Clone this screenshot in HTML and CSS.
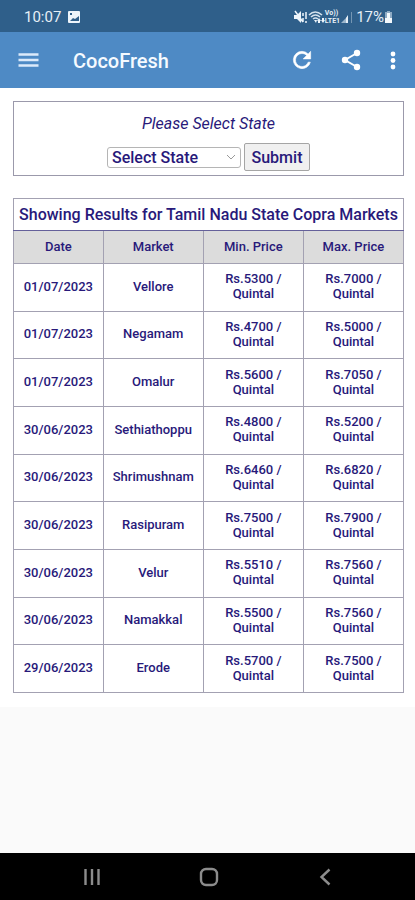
FILE: index.html
```
<!DOCTYPE html>
<html lang="en">
<head>
	<meta charset="UTF-8">
	<meta name="viewport" content="width=device-width, initial-scale=1">
	<title>CocoFresh</title>
	<link rel="stylesheet" href="styles.css">
</head>
<body>
	<div class="status">
		<span class="time">10:07</span>
		<svg class="pic" width="14" height="14" viewBox="0 0 14 14"><path fill="#eef5fb" fill-rule="evenodd" d="M2 1h10q1 0 1 1v10q0 1-1 1H2q-1 0-1-1V2q0-1 1-1zM3 3v2h2V3zM3 11h9V6L8 9 6 8z"/></svg>
		<div class="signals">
			<svg width="15" height="14" viewBox="0 0 15 14"><path fill="#eef5fb" d="M1 5h3l4-4v12L4 9H1z"/><path fill="none" stroke="#eef5fb" stroke-width="1.5" d="M2 1l8 11M10 3v3M10 8v4M13 2v7M13 11v2"/></svg>
			<svg class="wifi" width="17" height="14" viewBox="0 0 17 14"><g fill="none" stroke="#d5e2ed" stroke-width="1.6"><path d="M1 5q6-6 13 0M3 7q4.500-4 9 0M5 9q2.500-2 5 0"/></g><path fill="#eef5fb" d="M6 10h3l-1 3zM11 8l2 3h-1v2h-2v-2H9zM15 13l-2-3h1V8h2v2h1z"/></svg>
			<div class="volte"><span>Vo))</span><span>LTE1</span></div>
			<svg width="14" height="14" viewBox="0 0 14 14"><path fill="#9db7cd" d="M1 13l7-7v7z"/><path fill="#e5eef6" d="M6 8l2-3v8H6z"/><path fill="#7596b3" d="M11 2h1v11h-1z"/></svg>
			<span class="percent">17%</span>
			<svg width="9" height="14" viewBox="0 0 9 14"><path fill="#8fabc4" d="M3 1h3v1h2v11H1V2h2z"/><path fill="#f3f8fc" d="M3 3h3v5h2v5H1V8h2z"/></svg>
		</div>
	</div>

	<header class="bar">
		<button class="icon menu" aria-label="Menu">
			<svg width="24" height="24" viewBox="0 0 24 24"><path stroke="#dceafa" stroke-width="2.500" d="M2.500 6.500h20M2.500 12h20M2.500 17.500h20"/></svg>
		</button>
		<h1>CocoFresh</h1>
		<button class="icon" aria-label="Refresh">
			<svg width="26" height="26" viewBox="0 0 24 24"><path fill="#fff" stroke="#fff" stroke-width=".5" d="M17.650 6.350A7.958 7.958 0 0 0 12 4a8 8 0 1 0 7.730 10h-2.080A6 6 0 1 1 12 6c1.660 0 3.140.690 4.220 1.780L13 11h7V4z"/></svg>
		</button>
		<button class="icon" aria-label="Share">
			<svg width="24" height="24" viewBox="0 0 24 24"><path stroke="#fff" stroke-width="2" fill="none" d="M18 5L6 12l12 7"/><g fill="#fff"><circle cx="18" cy="5" r="3.200"/><circle cx="6" cy="12" r="3.200"/><circle cx="18" cy="19" r="3.200"/></g></svg>
		</button>
		<button class="icon more" aria-label="More options">
			<svg width="8" height="24" viewBox="0 0 8 24"><g fill="#fff"><circle cx="4" cy="6" r="2.400"/><circle cx="4" cy="12.500" r="2.400"/><circle cx="4" cy="19" r="2.400"/></g></svg>
		</button>
	</header>

	<main>
		<form class="search">
			<label for="state">Please Select State</label>
			<div class="fields">
				<select id="state">
					<option>Select State</option>
					<option>Tamil Nadu</option>
				</select>
				<button type="button" class="submit">Submit</button>
			</div>
		</form>

		<table class="prices">
			<colgroup>
				<col class="date"><col><col><col>
			</colgroup>
			<thead>
				<tr class="title"><th colspan="4">Showing Results for Tamil Nadu State Copra Markets</th></tr>
				<tr class="head"><th>Date</th><th>Market</th><th>Min. Price</th><th>Max. Price</th></tr>
			</thead>
			<tbody>
				<tr><td>01/07/2023</td><td>Vellore</td><td>Rs.5300 /<br>Quintal</td><td>Rs.7000 /<br>Quintal</td></tr>
				<tr><td>01/07/2023</td><td>Negamam</td><td>Rs.4700 /<br>Quintal</td><td>Rs.5000 /<br>Quintal</td></tr>
				<tr><td>01/07/2023</td><td>Omalur</td><td>Rs.5600 /<br>Quintal</td><td>Rs.7050 /<br>Quintal</td></tr>
				<tr><td>30/06/2023</td><td>Sethiathoppu</td><td>Rs.4800 /<br>Quintal</td><td>Rs.5200 /<br>Quintal</td></tr>
				<tr><td>30/06/2023</td><td>Shrimushnam</td><td>Rs.6460 /<br>Quintal</td><td>Rs.6820 /<br>Quintal</td></tr>
				<tr><td>30/06/2023</td><td>Rasipuram</td><td>Rs.7500 /<br>Quintal</td><td>Rs.7900 /<br>Quintal</td></tr>
				<tr><td>30/06/2023</td><td>Velur</td><td>Rs.5510 /<br>Quintal</td><td>Rs.7560 /<br>Quintal</td></tr>
				<tr><td>30/06/2023</td><td>Namakkal</td><td>Rs.5500 /<br>Quintal</td><td>Rs.7560 /<br>Quintal</td></tr>
				<tr><td>29/06/2023</td><td>Erode</td><td>Rs.5700 /<br>Quintal</td><td>Rs.7500 /<br>Quintal</td></tr>
			</tbody>
		</table>
	</main>

	<nav class="keys">
		<button class="icon" aria-label="Recent apps">
			<svg width="24" height="24" viewBox="0 0 24 24"><path stroke="#8c8c8c" stroke-width="2.400" d="M5.500 4v16M12 4v16M18.500 4v16"/></svg>
		</button>
		<button class="icon" aria-label="Home">
			<svg width="24" height="24" viewBox="0 0 24 24"><rect x="4" y="4" width="16" height="16" rx="5" fill="none" stroke="#8c8c8c" stroke-width="2.400"/></svg>
		</button>
		<button class="icon" aria-label="Back">
			<svg width="24" height="24" viewBox="0 0 24 24"><path fill="none" stroke="#8c8c8c" stroke-width="2.400" d="M16.500 4.500L8.500 12l8 7.500"/></svg>
		</button>
	</nav>
</body>
</html>
```
FILE: styles.css
```
*{
	margin:0;
	padding:0;
	box-sizing:border-box;
}
body{
	display:flex;
	flex-direction:column;
	min-height:100vh;
	background:#fafafa;
	font-family:Roboto, "Liberation Sans", sans-serif;
	color:#28197a;
}
svg{
	display:block;
}
.status{
	display:flex;
	align-items:center;
	height:32px;
	padding:2px 22px 0 24px;
	background:#2f5f8a;
	color:#e6eff7;
	font-size:15px;
}
.pic{
	margin-left:6px;
}
.signals{
	display:flex;
	align-items:center;
	margin-left:auto;
}
.volte{
	display:flex;
	flex-direction:column;
	font-size:7px;
	line-height:8px;
	font-weight:700;
}
.percent{
	margin-left:2px;
	font-size:15px;
}
.bar{
	display:flex;
	align-items:center;
	gap:24px;
	height:56px;
	padding:0 18px 0 16px;
	background:#4e8ac5;
}
.bar h1{
	flex:1;
	margin-left:9px;
	padding-top:2px;
	color:#f5faff;
	font-size:20px;
	font-weight:500;
}
.more{
	margin-left:2px;
}
.icon{
	border:0;
	background:none;
}
main{
	padding:13px 11px 14px 13px;
	background:#fff;
}
.search{
	display:flex;
	flex-direction:column;
	align-items:center;
	gap:9px;
	padding:12px 0 4px;
	border:1px solid #9b99ab;
}
.search label{
	font-size:16px;
	line-height:20px;
	font-style:italic;
}
.fields{
	display:flex;
	align-items:center;
	gap:3px;
}
.search select{
	appearance:none;
	width:134px;
	height:21px;
	padding-left:4px;
	border:1px solid #b5b5b5;
	border-radius:3px;
	background:#fff url("data:image/svg+xml,%3Csvg xmlns='http://www.w3.org/2000/svg' width='10' height='6'%3E%3Cpath d='M1 1l4 4 4-4' fill='none' stroke='%23999'/%3E%3C/svg%3E") no-repeat right 4px center;
	color:#28197a;
	font:500 16px Roboto, "Liberation Sans", sans-serif;
}
.submit{
	width:66px;
	height:28px;
	border:1px solid #a5a5a5;
	border-radius:2px;
	background:#f0f0f0;
	color:#28197a;
	font:500 16px Roboto, "Liberation Sans", sans-serif;
}
.prices{
	width:100%;
	height:495px;
	margin-top:22px;
	border-collapse:collapse;
	table-layout:fixed;
	font-size:13px;
	line-height:15px;
	text-align:center;
}
.prices .date{
	width:23%;
}
.prices th, .prices td{
	border:1px solid #a3a1b2;
	font-weight:500;
}
.prices td{
	padding-bottom:2px;
}
.prices .title th{
	height:32px;
	border-bottom-color:#64609a;
	font-size:16px;
	white-space:nowrap;
}
.prices .head th{
	height:33px;
	padding-bottom:2px;
	background:#dcdcdc;
}
.keys{
	display:flex;
	align-items:center;
	justify-content:space-between;
	height:47px;
	margin-top:auto;
	padding:0 78px 0 80px;
	background:#000;
}
```
